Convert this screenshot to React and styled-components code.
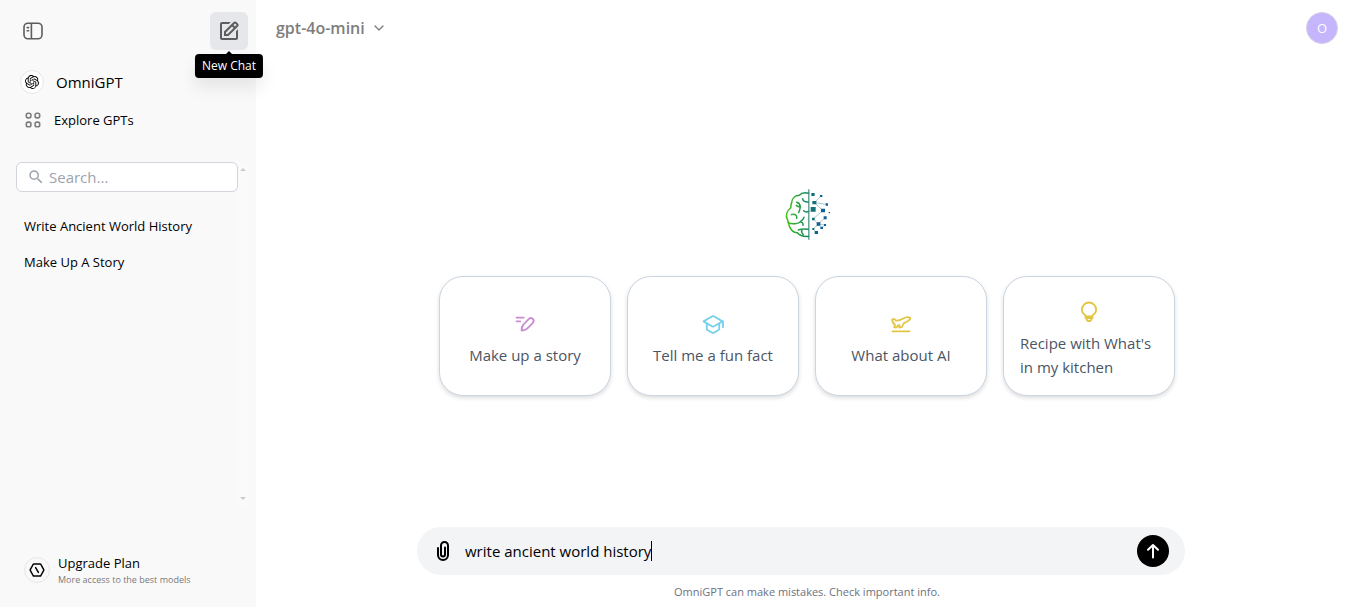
import React, { useState } from "react";
import styled, { createGlobalStyle } from "styled-components";
import { SiOpenai } from "react-icons/si";
import { BiEdit } from "react-icons/bi";
import { MdSearch } from "react-icons/md";
import { ChevronDown } from "lucide-react";

const GlobalStyle = createGlobalStyle`
  *, *::before, *::after { box-sizing: border-box; }
  body {
    margin: 0;
    background: #fff;
    color: #000;
    font-family: "Segoe UI", "Open Sans", "Noto Sans", sans-serif;
    font-size: 15px;
    line-height: 24px;
  }
  button, input { font: inherit; color: inherit; }
  button { border: 0; padding: 0; background: none; cursor: pointer; }
  a { color: inherit; text-decoration: none; }
  svg { display: block; flex-shrink: 0; }
  p, h1, ul { margin: 0; padding: 0; }
`;

const Layout = styled.div`
  display: flex;
  min-height: 100vh;
`;

/* Sidebar */
const Sidebar = styled.aside`
  display: flex;
  flex-direction: column;
  flex: 0 0 256px;
  min-width: 0;
  background: #f9f9f9;
`;

const SidebarTop = styled.div`
  display: flex;
  justify-content: space-between;
  padding: 12px 8px 0 14px;
`;

const IconButton = styled.button`
  position: relative;
  display: grid;
  place-items: center;
  width: 38px;
  height: 38px;
  border-radius: 6px;
  color: #5d5d5d;
  background: ${(p) => (p.$active ? "#e5e7eb" : "transparent")};
`;

const Tooltip = styled.span`
  position: absolute;
  top: 42px;
  left: 50%;
  transform: translateX(-50%);
  padding: 0 7px;
  border-radius: 4px;
  background: #000;
  color: #fff;
  font-size: 12px;
  font-weight: 500;
  line-height: 24px;
  white-space: nowrap;
  box-shadow: 0 10px 16px rgba(0, 0, 0, 0.08);

  &::before {
    content: "";
    position: absolute;
    top: -3px;
    left: 50%;
    border: solid transparent;
    border-width: 0 4px 4px;
    border-bottom-color: #000;
    transform: translateX(-50%);
  }
`;

const Nav = styled.nav`
  display: flex;
  flex-direction: column;
  gap: 2px;
  padding: 14px 20px 24px;
`;

const NavLink = styled.a`
  display: flex;
  align-items: center;
  gap: ${(p) => (p.$small ? "10px" : "12px")};
  height: 36px;
  font-size: ${(p) => (p.$small ? "13px" : "15px")};
`;

const RoundBadge = styled.span`
  display: grid;
  place-items: center;
  width: ${(p) => p.$size}px;
  height: ${(p) => p.$size}px;
  border: 1px solid #e5e7eb;
  border-radius: 50%;
  background: ${(p) => p.$fill || "transparent"};
`;

const GridSlot = styled.span`
  display: grid;
  place-items: center;
  width: 24px;
  padding-left: 2px;
  color: #7d7d7d;
`;

const History = styled.div`
  display: flex;
  flex: 1;
  max-height: 344px;
  margin: 0 8px 0 16px;
`;

const HistoryBody = styled.div`
  flex: 1;
  min-width: 0;
`;

const SearchBox = styled.label`
  display: flex;
  align-items: center;
  gap: 4px;
  height: 30px;
  padding: 0 10px;
  border: 1px solid #d1d5db;
  border-radius: 6px;
  background: #fff;
  color: #9ca3af;
`;

const SearchInput = styled.input`
  flex: 1;
  min-width: 0;
  padding: 0;
  border: 0;
  outline: 0;
  background: transparent;

  &::placeholder { color: #9ca3af; opacity: 1; }
`;

const ChatList = styled.ul`
  list-style: none;
  padding: 16px 8px;
`;

const ChatLink = styled.a`
  display: block;
  font-size: 13px;
  line-height: 36px;
`;

const ScrollTrack = styled.div`
  display: flex;
  flex-direction: column;
  justify-content: space-between;
  align-items: center;
  width: 10px;
  padding: 6px 0;
  background: #fafafb;
`;

const ScrollArrow = styled.span`
  border: solid transparent;
  border-width: ${(p) => (p.$up ? "0 3px 3px" : "3px 3px 0")};
  border-bottom-color: ${(p) => (p.$up ? "#c9cad3" : "transparent")};
  border-top-color: ${(p) => (p.$up ? "transparent" : "#c9cad3")};
`;

const Upgrade = styled.a`
  display: flex;
  align-items: center;
  gap: 8px;
  margin-top: auto;
  padding: 0 24px 20px;
`;

const UpgradeTitle = styled.span`
  display: block;
  font-size: 13px;
  line-height: 20px;
`;

const UpgradeNote = styled.span`
  display: block;
  color: #7a7a7a;
  font-size: 9px;
  line-height: 14px;
`;

/* Main area */
const Main = styled.main`
  display: flex;
  flex: 1;
  flex-direction: column;
  min-width: 0;
`;

const Header = styled.header`
  display: flex;
  align-items: center;
  justify-content: space-between;
  height: 56px;
  padding: 0 20px;
`;

const ModelButton = styled.button`
  display: flex;
  align-items: center;
  gap: 6px;
  color: #7d7d7d;
  font-size: 16px;
  font-weight: 600;
`;

const Avatar = styled.button`
  width: 32px;
  height: 32px;
  border: 1px solid #d5d0e4;
  border-radius: 50%;
  background: #c4b5fd;
  color: #fff;
  font-size: 13px;
  line-height: 30px;
`;

const Welcome = styled.section`
  display: flex;
  flex: 1;
  flex-direction: column;
  align-items: center;
  justify-content: center;
  gap: 36px;
`;

const Cards = styled.div`
  display: flex;
  flex-wrap: wrap;
  justify-content: center;
  gap: 16px;
`;

const Card = styled.button`
  display: flex;
  flex-direction: column;
  align-items: center;
  justify-content: center;
  gap: 7px;
  width: 172px;
  height: 120px;
  padding: 7px 16px 0;
  border: 1px solid #cbd5e1;
  border-radius: 24px;
  background: #fff;
  color: #4b5563;
  text-align: left;
  box-shadow: 0 2px 4px rgba(0, 0, 0, 0.14);

  svg { color: ${(p) => p.$accent}; }
`;

const Composer = styled.form`
  display: flex;
  align-items: center;
  align-self: center;
  width: calc(100% - 44px);
  max-width: 768px;
  height: 48px;
  margin-right: 12px;
  padding: 0 16px 0 14px;
  border-radius: 24px;
  background: #f3f4f6;
`;

const AttachButton = styled.button`
  margin-right: 10px;
`;

const Field = styled.div`
  display: flex;
  flex: 1;
  align-items: center;
  min-width: 0;
`;

const PromptInput = styled.input`
  field-sizing: content;
  min-width: 1px;
  max-width: 100%;
  padding: 0;
  border: 0;
  outline: 0;
  background: transparent;
  caret-color: transparent;
`;

const Caret = styled.span`
  width: 1px;
  height: 20px;
  background: #000;
`;

const SendButton = styled.button`
  display: grid;
  place-items: center;
  width: 32px;
  height: 32px;
  border-radius: 50%;
  background: #000;
  color: #fff;
`;

const Disclaimer = styled.p`
  padding: 9px 0 7px;
  color: #6b7280;
  font-size: 11px;
  line-height: 16px;
  text-align: center;
`;

/* Drawings */
const SidebarIcon = () => (
  <svg width="22" height="18" viewBox="0 0 22 18" fill="none" stroke="currentColor" strokeWidth="1.6">
    <rect x="2" y="1.2" width="18" height="15.6" rx="4" />
    <path d="M9.4 1.2v15.6" />
    <path d="M5.2 5.6h1.4M5.2 8.8h1.4" strokeLinecap="round" />
  </svg>
);

const GridIcon = () => (
  <svg width="16" height="16" viewBox="0 0 16 16" fill="none" stroke="currentColor" strokeWidth="1.6">
    <rect x="1.3" y="1.3" width="4.6" height="4.6" rx="1.8" />
    <rect x="10.1" y="1.3" width="4.6" height="4.6" rx="1.8" />
    <rect x="1.3" y="10.1" width="4.6" height="4.6" rx="1.8" />
    <rect x="10.1" y="10.1" width="4.6" height="4.6" rx="1.8" />
  </svg>
);

const HexIcon = () => (
  <svg width="16" height="16" viewBox="0 0 16 16" fill="none" stroke="currentColor" strokeWidth="1.5" strokeLinejoin="round" strokeLinecap="round">
    <path d="M4.9 2h6.2q.5 0 .8.5l2.7 4.8q.4.7 0 1.4l-2.7 4.8q-.3.5-.8.5H4.9q-.5 0-.8-.5L1.4 8.7q-.4-.7 0-1.4l2.7-4.8q.3-.5.8-.5z" />
    <path d="M6.6 5.6l2.8 4.8" />
  </svg>
);

const BrainLogo = () => (
  <svg width="48" height="52" viewBox="39 24 144 156" fill="none" role="img" aria-label="OmniGPT">
    <defs>
      <linearGradient id="brain" x1="48" y1="0" x2="120" y2="0" gradientUnits="userSpaceOnUse">
        <stop offset="0" stopColor="#3fc412" />
        <stop offset="1" stopColor="#128070" />
      </linearGradient>
    </defs>
    <g stroke="url(#brain)" strokeWidth="4.5" strokeLinecap="round">
      <path d="M116 40C104 36 94 39 88 46C76 46 66 54 65 68C62 74 63 80 62 84C50 92 46 108 52 118C56 126 56 132 58 138C62 150 72 158 82 158C90 168 104 170 116 169" />
      <path d="M80 67C94 70 92 86 86 98M92 80C84 80 80 78 79 76M98 56C98 62 104 67 115 66M64 104C74 100 82 106 80 115M116 94C108 98 103 94 101 92M54 128C66 134 86 132 92 124C98 120 101 116 102 112M92 126C98 126 100 132 99 136M85 150C94 146 104 146 115 148M96 150C92 156 98 162 100 164" />
    </g>
    <path d="M116.5 28V179" stroke="#328b78" strokeWidth="3.5" />
    <path d="M133 68L153 48M133 68L170 73M133 68L158 91L130 117L145 132L165 113M145 132L130 147L139 157M145 132L155 143L165 135M145 132L165 135" stroke="#78aebd" strokeWidth="2" />
    <g fill="#137277">
      <path d="M124 39h10v9h-10zM127 63h12v10h-12zM122 81h15v14h-15zM126 113h8v8h-8zM127 144h6v6h-6z" />
    </g>
    <g fill="#125f91">
      <path d="M150 45h7v6h-7zM167 70h7v7h-7zM153 86h12v11h-12zM140 127h11v10h-11zM161 109h9v9h-9zM162 132h6v6h-6zM151 140h8v7h-8zM134 153h10v9h-10zM176 96h4v4h-4z" />
    </g>
  </svg>
);

const CardIcon = ({ children }) => (
  <svg width="24" height="24" viewBox="0 0 24 24" fill="none" stroke="currentColor" strokeWidth="1.8" strokeLinejoin="round" strokeLinecap="round">
    {children}
  </svg>
);

const PencilIcon = () => (
  <CardIcon>
    <path d="M3.5 5.6h7.2M3.5 9.3h3.8" />
    <path d="M8.6 18.5c-.1-2.9.3-4.400 1.900-6l4.900-5.200c1.500-1.500 3.200-1.500 4.400-.4 1.200 1.200 1.100 2.900-.4 4.400l-5 5c-1.600 1.600-3 2.200-5.800 2.200z" />
  </CardIcon>
);

const CapIcon = () => (
  <CardIcon>
    <path d="M2.5 9.4L11.3 4.3q.7-.4 1.4 0l8.9 5.1-8.9 5.1q-.7.4-1.400 0L2.500 9.400z" />
    <path d="M5.800 12v5q0 .7.600 1l4.800 2.800q.8.4 1.600 0l4.800-2.800q.6-.3.600-1v-5M22 9.500v5.800" />
  </CardIcon>
);

const PlaneIcon = () => (
  <CardIcon>
    <path d="M3.500 19.300h17" />
    <path d="M3 7.700l1.500-.7q.5-.2.900.2l1.300 1.200q.3.200.8.200 3.300-.2 6.300-1.900c2.400-1.400 5.300-1.800 6.900-1.100 1 .5.700 1.600-.2 2.300-1.700 1.400-3.800 2.600-5.600 3.300l-1.800 3.400q-.3.500-.8.600l-2.100.4.300-2.500-1.500.2-1.400 1.900q-.3.400-.8.300l-1.600-.3.800-2.700C4.500 11.800 3.500 9.900 3 7.700z" />
  </CardIcon>
);

const BulbIcon = () => (
  <CardIcon>
    <path d="M8.5 16.5v-1.300C6.200 14 4.900 11.900 4.900 9.600a7.100 7.100 0 0 1 14.200 0c0 2.300-1.300 4.400-3.600 5.600v1.300zM8.500 16.500v1.600h7v-1.600M9.400 18.500c.3 1.700 1.300 2.700 2.600 2.700s2.300-1 2.600-2.700" />
  </CardIcon>
);

const ClipIcon = () => (
  <svg width="24" height="24" viewBox="0 0 24 24" fill="none" stroke="currentColor" strokeWidth="2" strokeLinecap="round">
    <path d="M7 9v7a5 5 0 0 0 10 0V6.500a3.500 3.500 0 0 0-7 0v9a2 2 0 0 0 4 0V8.500" />
  </svg>
);

const ArrowIcon = () => (
  <svg width="16" height="16" viewBox="0 0 16 16" fill="none" stroke="currentColor" strokeWidth="2" strokeLinecap="round" strokeLinejoin="round">
    <path d="M8 14.5V2M3 6.8L8 2l5 4.8" />
  </svg>
);

const suggestions = [
  { label: "Make up a story", accent: "#cb8bd0", Icon: PencilIcon },
  { label: "Tell me a fun fact", accent: "#76d0eb", Icon: CapIcon },
  { label: "What about AI", accent: "#e2c541", Icon: PlaneIcon },
  { label: "Recipe with What's in my kitchen", accent: "#e2c541", Icon: BulbIcon },
];

const chats = ["Write Ancient World History", "Make Up A Story"];

export default function App() {
  const [prompt, setPrompt] = useState("write ancient world history");

  return (
    <>
      <GlobalStyle />
      <Layout>
        <Sidebar>
          <SidebarTop>
            <IconButton type="button" aria-label="Close sidebar">
              <SidebarIcon />
            </IconButton>
            <IconButton type="button" $active>
              <BiEdit size={24} />
              <Tooltip role="tooltip">New Chat</Tooltip>
            </IconButton>
          </SidebarTop>
          <Nav>
            <NavLink href="#omnigpt">
              <RoundBadge $size={24} $fill="#fff"><SiOpenai size={14} /></RoundBadge>
              OmniGPT
            </NavLink>
            <NavLink href="#explore" $small>
              <GridSlot><GridIcon /></GridSlot>
              Explore GPTs
            </NavLink>
          </Nav>
          <History>
            <HistoryBody>
              <SearchBox>
                <MdSearch size={18} />
                <SearchInput type="text" placeholder="Search..." aria-label="Search" />
              </SearchBox>
              <ChatList>
                {chats.map((chat) => (
                  <li key={chat}><ChatLink href="#chat">{chat}</ChatLink></li>
                ))}
              </ChatList>
            </HistoryBody>
            <ScrollTrack aria-hidden="true">
              <ScrollArrow $up />
              <ScrollArrow />
            </ScrollTrack>
          </History>
          <Upgrade href="#upgrade">
            <RoundBadge $size={26}><HexIcon /></RoundBadge>
            <span>
              <UpgradeTitle>Upgrade Plan</UpgradeTitle>
              <UpgradeNote>More access to the best models</UpgradeNote>
            </span>
          </Upgrade>
        </Sidebar>

        <Main>
          <Header>
            <ModelButton type="button">
              gpt-4o-mini
              <ChevronDown size={16} />
            </ModelButton>
            <Avatar type="button">O</Avatar>
          </Header>
          <Welcome>
            <BrainLogo />
            <Cards>
              {suggestions.map(({ label, accent, Icon }) => (
                <Card key={label} type="button" $accent={accent}>
                  <Icon />
                  <span>{label}</span>
                </Card>
              ))}
            </Cards>
          </Welcome>
          <Composer onSubmit={(e) => e.preventDefault()}>
            <AttachButton type="button" aria-label="Attach file"><ClipIcon /></AttachButton>
            <Field>
              <PromptInput
                type="text"
                aria-label="Message"
                value={prompt}
                onChange={(e) => setPrompt(e.target.value)}
              />
              <Caret />
            </Field>
            <SendButton type="submit" aria-label="Send"><ArrowIcon /></SendButton>
          </Composer>
          <Disclaimer>OmniGPT can make mistakes. Check important info.</Disclaimer>
        </Main>
      </Layout>
    </>
  );
}
